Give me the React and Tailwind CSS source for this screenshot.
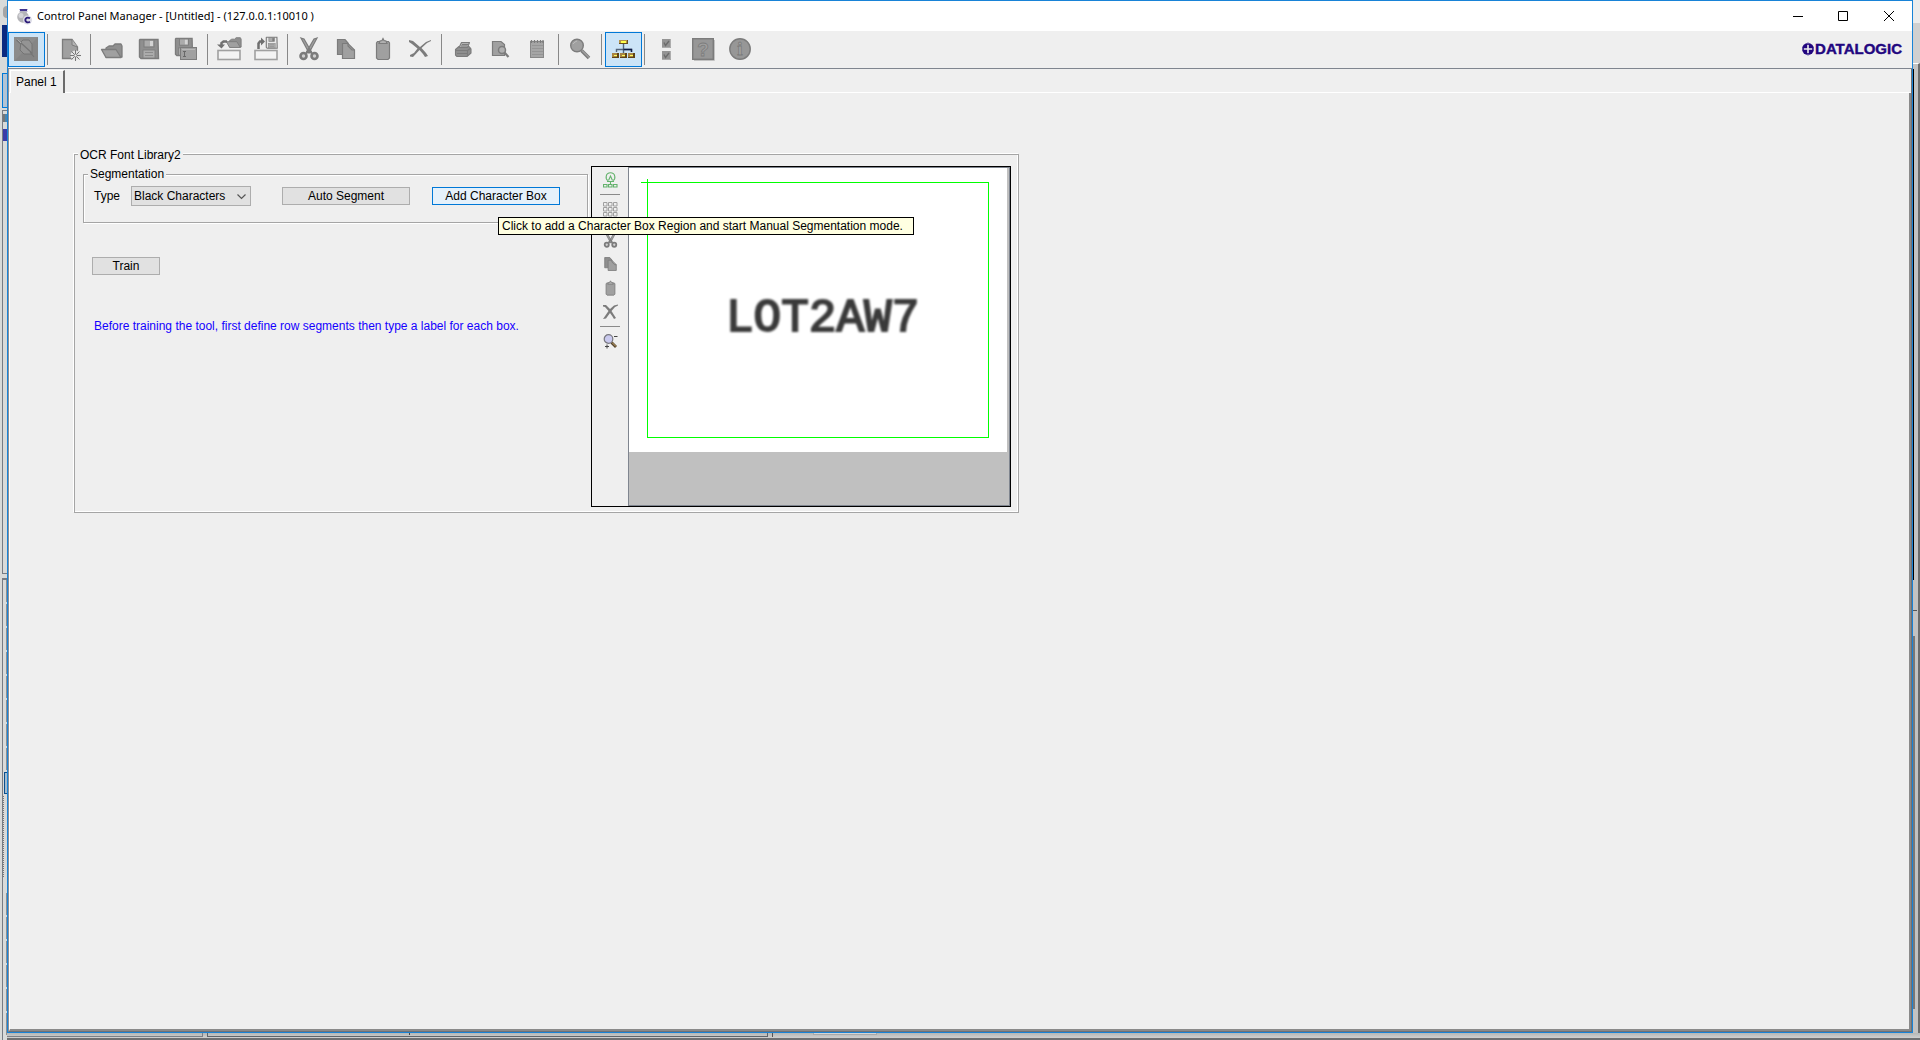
import React from "react";

const D = "#7c7c7c";
const F = "#a0a0a0";
const M = "#8f8f8f";

function Floppy({ x, y, s, light }) {
  const k = s / 20;
  return (
    <g transform={`translate(${x} ${y}) scale(${k})`}>
      <path d="M1 .5H19L19.5 19.5H2L.5 18V1Z" fill={light ? "#e8e8e8" : M} stroke={D} strokeWidth={light ? 2 : 1.4} />
      <rect x="5" y="1" width="10" height="7" fill="#ababab" stroke={D} />
      <rect x="11" y="2" width="3" height="5" fill={light ? D : "#d4d4d4"} />
      <rect x="4" y="11" width="12" height="8" fill="#acacac" stroke={D} strokeWidth=".8" />
      <path d="M6 13.500H14M6 16.500H14" stroke="#8b8b8b" />
    </g>
  );
}

function Folder({ x = 0, y = 0, k = 1 }) {
  return (
    <g transform={`translate(${x} ${y}) scale(${k})`} fill={F} stroke={D} strokeWidth="1.3" strokeLinejoin="round">
      <path d="M5 14V5L8 3H12L14 1H20L21 3V14Z" fill={M} />
      <path d="M.5 6.500H15L20 14.500H5Z" />
    </g>
  );
}

function Scissors() {
  return (
    <g stroke={D} fill="none">
      <path d="M10 6L13 7L20.500 20L18 21Z M26 6L23 7L15.500 20L18 21Z" fill={F} strokeWidth="1.2" />
      <circle cx="12.500" cy="24" r="3" strokeWidth="2.6" fill="#d0d0d0" />
      <circle cx="23.500" cy="24" r="3" strokeWidth="2.6" fill="#d0d0d0" />
      <path d="M15 22L18 17L21 22" strokeWidth="2" />
    </g>
  );
}

function Pages() {
  return (
    <g fill={F} stroke={D} strokeWidth="1.2">
      <path d="M9.500 7.500H17L20 11V22.500H9.500Z" fill={M} />
      <path d="M14.500 11.500H20L26.500 18V26.500H14.500Z" />
      <path d="M20 11.500V14L24 18H26.500" fill="none" />
    </g>
  );
}

function Clipboard() {
  return (
    <g stroke={D} strokeWidth="1.2">
      <path d="M12.500 9.500H23.500L24.500 11V26L23 27.500H13L11.500 26V11Z" fill={F} />
      <path d="M14 11.500L15 9L17 8.500L18 6.500L19 8.500L21 9L22 11.500Z" fill="#b0b0b0" />
    </g>
  );
}

function Cross() {
  return (
    <path
      d="M7 8L11 9L18 15L24 10L29 8V9L25 11L19.500 16L24 21L26 24L23 25L21 22L17.500 18L11 25L8 24.500V23L12 21L15.500 16.500L10 12L7 10Z"
      fill={D}
    />
  );
}

const icons = {
  connect: (
    <>
      <rect x="6" y="5" width="24" height="24" fill="#8c8c8c" />
      <path d="M6 29L30 5V29Z" fill="#858585" />
      <path d="M13 10L15 8H21L24 12V22H16L12 18Z" fill="#949494" stroke="#747474" />
      <path d="M8.500 8L13 12M22 20L26 25M13 11L24 21" stroke="#747474" strokeWidth="1.2" />
      <path d="M9.500 7.500L13 11" stroke="#a8a8a8" />
    </>
  ),
  create: (
    <>
      <path d="M11.500 7.500H21L26.500 15V26.500H11.500Z" fill={F} stroke={D} strokeWidth="1.3" />
      <path d="M21 7.500V13L26.500 15" fill="#b5b5b5" stroke={D} />
      <circle cx="24.500" cy="23.500" r="5" fill="#e4e4e4" />
      <path d="M24.500 18V29M19 23.500H30M20.500 19.500L28.500 27.500M28.500 19.500L20.500 27.500" stroke="#777" />
      <circle cx="24.500" cy="23.500" r="1.500" fill="#f2f2f2" stroke="#777" strokeWidth=".7" />
    </>
  ),
  open: <Folder x={7} y={11} />,
  save: <Floppy x={8} y={7} s={20} />,
  saveAs: (
    <>
      <Floppy x={7} y={6} s={18} />
      <rect x="12.500" y="15.500" width="16" height="12" fill={F} stroke={D} />
      <path d="M14 17.500H27" stroke="#b8b8b8" />
      <path d="M15 19.500H18M16.500 19.500V24.500M15 24.500H18" stroke="#686868" />
    </>
  ),
  importPanel: (
    <>
      <rect x="7" y="18.500" width="22" height="9" fill="#f3f3f3" stroke={F} strokeWidth="1.6" />
      <Folder x={15} y={5} k={0.72} />
      <path d="M16 9.500H12.500L10.500 11V13" fill="none" stroke="#707070" strokeWidth="2.500" />
      <path d="M6 12.500H14L10.500 16.500Z" fill="#707070" />
    </>
  ),
  exportPanel: (
    <>
      <rect x="7" y="18.500" width="22" height="9" fill="#f3f3f3" stroke={F} strokeWidth="1.6" />
      <Floppy x={18} y={5} s={11.500} light />
      <path d="M10.500 17V11.500L12 9.500H14" fill="none" stroke="#707070" strokeWidth="2.500" />
      <path d="M13 5.500L17 9.500L13 13.500Z" fill="#707070" />
    </>
  ),
  cut: <Scissors />,
  copy: <Pages />,
  paste: <Clipboard />,
  remove: <Cross />,
  print: (
    <g stroke={D} strokeWidth="1.1" fill={F} strokeLinejoin="round">
      <path d="M10.500 17.500L14 14.500H24L26 17V21L22 24.500H12L10.500 23Z" fill={M} />
      <path d="M14 15.500L16.500 10.500H24.500L22.500 15.500Z" fill="#b4b4b4" />
      <path d="M17 12.500H23M16 14H22M10.500 18.500H22.500L26 16M12 21.500H22M22.500 18.500V24" fill="none" />
    </g>
  ),
  preview: (
    <g stroke={D} strokeWidth="1.2">
      <path d="M10.500 9.500H19L22.500 12.500V23.500H10.500Z" fill={F} />
      <circle cx="20" cy="18" r="3.500" fill="#b0b0b0" strokeWidth="1.500" />
      <path d="M22.500 20.500L26.500 25" strokeWidth="2.200" />
    </g>
  ),
  notes: (
    <g stroke={D}>
      <rect x="11.500" y="9.500" width="13" height="16" fill="#a6a6a6" stroke="#888" />
      <path d="M12.500 8V11M15.500 8V11M18.500 8V11M21.500 8V11M24 8V11" strokeWidth="1.3" />
      <path d="M13 13.500H24M13 16.500H24M13 19.500H24M13 22.500H24" stroke="#959595" />
    </g>
  ),
  find: (
    <>
      <path d="M19.500 18.500L27 26" stroke={D} strokeWidth="3.600" />
      <path d="M20 18.500L27 25.500" stroke={F} strokeWidth="1.2" />
      <circle cx="15" cy="13.500" r="6.300" fill={F} stroke={D} strokeWidth="1.4" />
      <path d="M11 12L13 10L15 9" fill="none" stroke="#bbb" />
    </>
  ),
  tree: (
    <>
      <path d="M18.500 12V21M11.500 20V17.500H26.500V20" fill="none" stroke="#53657c" strokeWidth="1.4" />
      <path d="M18.500 17.500H26.500V20" fill="none" stroke="#101c46" strokeWidth="1.4" />
      <rect x="14" y="8" width="9" height="4" fill="#6b4f1e" />
      <rect x="14" y="8" width="8" height="3" fill="#b5934b" />
      <rect x="16" y="9" width="5" height="2" fill="#ffff4d" />
      {[7, 15, 23].map((x) => (
        <g key={x}>
          <rect x={x} y="21" width="7" height="5" fill="#5e4315" />
          <rect x={x} y="21" width="5" height="4" fill="#a98543" />
          <rect x={x + 2} y="23" width="3" height="1" fill="#ffff5a" />
        </g>
      ))}
    </>
  ),
  checks: (
    <>
      {[7, 19].map((y) => (
        <g key={y} transform={`translate(14 ${y})`}>
          <rect width="9" height="9" fill="#949494" />
          <path d="M8.500 0V8.500H0" fill="none" stroke="#adadad" />
          <path d="M2 3.500L3.500 6.500L7 2" fill="none" stroke="#6c6c6c" strokeWidth="1.400" />
        </g>
      ))}
    </>
  ),
  help: (
    <>
      <path d="M29.500 8V28.500H9" fill="none" stroke="#c2c2c2" />
      <rect x="7.700" y="6.700" width="20.600" height="20.600" fill="#979797" stroke={D} strokeWidth="1.4" />
      <text x="18" y="24" textAnchor="middle" fontFamily="Liberation Sans" fontWeight="700" fontSize="19" fill="#9f9f9f" stroke="#7c7c7c" strokeWidth=".8">?</text>
    </>
  ),
  info: (
    <>
      <circle cx="18.500" cy="17.500" r="10.500" fill="#c2c2c2" />
      <circle cx="18" cy="17" r="10.200" fill="#979797" stroke={D} strokeWidth="1.4" />
      <text x="18" y="23" textAnchor="middle" fontFamily="Liberation Serif" fontWeight="700" fontSize="19" fill="#a2a2a2" stroke="#7c7c7c" strokeWidth=".8">i</text>
    </>
  ),
};

const toolbar = [
  [["connect", "Connect", true]],
  [["create", "New"]],
  [["open", "Open"], ["save", "Save"], ["saveAs", "Save As"]],
  [["importPanel", "Import"], ["exportPanel", "Export"]],
  [["cut", "Cut"], ["copy", "Copy"], ["paste", "Paste"], ["remove", "Delete"]],
  [["print", "Print"], ["preview", "Preview"], ["notes", "Notes"]],
  [["find", "Find"]],
  [["tree", "Show tree", true]],
  [["checks", "Options"], ["help", "Help"], ["info", "About"]],
];

function ToolButton({ name, label, active }) {
  return (
    <button
      type="button"
      aria-label={label}
      className={active ? "h-[35px] w-[37px] bg-[#cce4f7] ring-1 ring-[#0078d7] ring-inset" : "h-[35px] w-[37px]"}
    >
      <svg width="37" height="35" viewBox="0 0 37 35">{icons[name]}</svg>
    </button>
  );
}

function TitleBar() {
  return (
    <header className="flex h-[30px] items-center bg-white pl-2">
      <svg width="16" height="18" viewBox="0 0 16 18" className="mr-[5px]">
        <path d="M3.500 2H11.500L10.500 5.500H4.500Z" fill="#43358f" />
        <path d="M3.500 4.500H11.500" stroke="#b9b6cc" />
        <circle cx="7" cy="10" r="5.800" fill="#b4b4b8" />
        <circle cx="5" cy="8.500" r="2.500" fill="#d4d4d8" />
        <circle cx="11.500" cy="13" r="4.500" fill="#dcdce6" />
        <path d="M14 11.300C11.500 9.800 9.300 11 9.300 13S11.500 16.200 14 14.700" fill="none" stroke="#2b1a78" strokeWidth="1.900" />
      </svg>
      <h1 className="flex-1 font-['Noto_Sans','Open_Sans',sans-serif] text-[11px] leading-4 whitespace-pre">
        Control Panel Manager - [Untitled] - (127.0.0.1:10010 )
      </h1>
      <div className="flex">
        <button type="button" aria-label="Minimize" className="grid h-[28px] w-[45px] place-items-center">
          <svg width="10" height="10" viewBox="0 0 10 10"><path d="M0 5.500H10" stroke="#000" /></svg>
        </button>
        <button type="button" aria-label="Maximize" className="grid h-[28px] w-[45px] place-items-center">
          <svg width="10" height="10" viewBox="0 0 10 10"><path d="M.5 .5H9.500V9.500H.5Z" fill="none" stroke="#000" /></svg>
        </button>
        <button type="button" aria-label="Close" className="grid h-[28px] w-[47px] place-items-center">
          <svg width="10" height="10" viewBox="0 0 10 10"><path d="M0 0L10 10M10 0L0 10" stroke="#000" /></svg>
        </button>
      </div>
    </header>
  );
}

function Logo() {
  return (
    <div className="flex items-center gap-px">
      <svg width="12" height="14" viewBox="0 0 12 14">
        <circle cx="6" cy="7" r="6" fill="#22067f" />
        <path d="M6 3V11M2 7H10" stroke="#efefef" strokeWidth="1.600" />
        <path d="M6 0V2.500M6 11.500V14M0 7H1.500M10.500 7H12" stroke="#8d80bd" strokeWidth="1" />
      </svg>
      <span className="text-[15px] leading-5 font-bold text-[#22067f] [-webkit-text-stroke:0.4px_#22067f]">DATALOGIC</span>
    </div>
  );
}

function Toolbar() {
  return (
    <div role="toolbar" className="flex h-[38px] items-start border-b border-[#7f858f] pt-px">
      {toolbar.map((group, i) => (
        <React.Fragment key={i}>
          {i > 0 && <span className="mt-0.5 mr-[3px] ml-0.5 h-[31px] w-px bg-[#888]" />}
          {group.map(([name, label, active]) => (
            <ToolButton key={name} name={name} label={label} active={active} />
          ))}
        </React.Fragment>
      ))}
      <div className="mt-[7px] mr-2.5 ml-auto">
        <Logo />
      </div>
    </div>
  );
}

const sideIcons = {
  tree: (
    <g fill="none" stroke="#63b26c" strokeWidth="1.1">
      <path d="M5 8.500C2 7 2.500 .800 7.500 .800S13 7 10 8.500" />
      <path d="M5.500 8.500L7.500 4L9.500 8.500M4 9.500H11M7.500 9V12" />
      <path d="M.5 12.500H4V15H.5ZM5.500 12.500H9V15H5.500ZM10.500 12.500H14V15H10.500Z" />
    </g>
  ),
  grid: (
    <g fill="none" stroke="#a0a0a0">
      {[0.5, 5.5, 10.5].map((y) => (
        <path key={y} d={`M.5 ${y}h3.500v3.500h-3.500zM5.500 ${y}h3.500v3.500h-3.500zM10.500 ${y}h3.500v3.500h-3.500z`} />
      ))}
    </g>
  ),
  cross: (
    <path d="M0 1H3L7 5L11 1.500L15 .5V1.500L12 3L8.500 7L11 11L13 14L11 15L9.500 12.500L7 9L3 14.500L0 15L5.500 7L2 3L0 2.500Z" fill={D} />
  ),
  zoom: (
    <>
      <path d="M8.500 8.500L13 13" stroke="#54442e" strokeWidth="2.800" />
      <path d="M9 8.500L13 12.500" stroke="#c9a86b" />
      <circle cx="5.500" cy="5" r="4.300" fill="#c9c9ee" stroke="#77777f" strokeWidth="1.2" />
      <path d="M11 2.500H14.500M2 12.500H6M4 10.500V14.500" stroke="#444" />
    </>
  ),
};

function SideButton({ label, children, big }) {
  return (
    <button type="button" aria-label={label} className="grid h-6 w-6 place-items-center">
      <svg width="15" height="16" viewBox={big ? "7 6 22 22" : "0 0 15 16"}>{children}</svg>
    </button>
  );
}

function ImageViewer() {
  return (
    <div className="flex h-[341px] w-[420px] border border-black">
      <div className="flex w-9 flex-col items-center pt-px">
        <SideButton label="Segment tree">{sideIcons.tree}</SideButton>
        <span className="mt-0.5 mb-[3px] h-px w-5 bg-[#8a8a8a]" />
        <SideButton label="Grid">{sideIcons.grid}</SideButton>
        <span className="h-1.5" />
        <SideButton label="Cut region" big><Scissors /></SideButton>
        <SideButton label="Copy region" big><Pages /></SideButton>
        <SideButton label="Paste region" big><Clipboard /></SideButton>
        <SideButton label="Delete region">{sideIcons.cross}</SideButton>
        <span className="mt-0.5 mb-[3px] h-px w-5 bg-[#8a8a8a]" />
        <SideButton label="Zoom">{sideIcons.zoom}</SideButton>
      </div>
      <div className="flex-1 border border-[#7f858f] bg-[#c0c0c0] pr-0.5">
        <div className="relative h-[284px] bg-white">
          <span className="absolute top-[14px] left-3 h-px w-1.5 bg-[#00ff00]" />
          <span className="absolute top-[11px] left-[18px] h-[3px] w-px bg-[#00ff00]" />
          <div className="absolute top-[14px] right-[18px] bottom-[14px] left-[18px] border border-[#00ff00]" />
          <p className="absolute top-[127px] left-[97px] font-['Liberation_Mono',monospace] text-[46px] leading-[48px] text-[#3a3a3a] blur-[1px] [-webkit-text-stroke:2px_#3a3a3a]">
            LOT2AW7
          </p>
        </div>
      </div>
    </div>
  );
}

function Segmentation() {
  return (
    <fieldset className="h-[56px] min-w-0 border border-[#a5a5a5] pl-2.5 shadow-[inset_1px_1px_0_#fff,1px_1px_0_#fff]">
      <legend className="-ml-1.5 h-[14px] bg-[#efefef] px-0.5 leading-[15px]">Segmentation</legend>
      <div className="flex items-center pt-[5px]">
        <label htmlFor="type" className="w-[37px]">Type</label>
        <div className="relative">
          <select
            id="type"
            className="block h-5 w-[120px] appearance-none rounded-none border border-[#adadad] bg-[#e1e1e1] pl-0.5 leading-[18px]"
          >
            <option>Black Characters</option>
          </select>
          <svg width="9" height="6" viewBox="0 0 9 6" className="pointer-events-none absolute top-[8px] right-[5px]">
            <path d="M.5 .5L4.500 4.500L8.500 .5" fill="none" stroke="#555" strokeWidth="1.2" />
          </svg>
        </div>
        <button type="button" className="ml-[31px] h-[18px] w-32 border border-[#adadad] bg-[#e1e1e1] leading-4">
          Auto Segment
        </button>
        <div className="relative ml-[22px]">
          <button
            type="button"
            aria-describedby="tip"
            className="block h-[18px] w-32 border border-[#0078d7] bg-[#e5f1fb] leading-4"
          >
            Add Character Box
          </button>
          <div
            id="tip"
            role="tooltip"
            className="absolute top-[30px] left-[66px] z-10 h-[18px] w-[416px] border border-black bg-[#ffffe1] px-[3px] leading-4 whitespace-nowrap"
          >
            Click to add a Character Box Region and start Manual Segmentation mode.
          </div>
        </div>
      </div>
    </fieldset>
  );
}

function OcrPanel() {
  return (
    <fieldset className="w-[945px] border border-[#a5a5a5] pr-[7px] pb-[5px] pl-2 shadow-[-1px_-1px_0_#fff,inset_-1px_-1px_0_#fff]">
      <legend className="-ml-[5px] h-[15px] bg-[#efefef] px-0.5 leading-4">OCR Font Library2</legend>
      <div className="flex gap-[3px] pt-1">
        <div className="min-w-0 flex-1 pt-px">
          <Segmentation />
          <button type="button" className="mt-[34px] ml-[9px] block h-[18px] w-[68px] border border-[#adadad] bg-[#e1e1e1] leading-4">
            Train
          </button>
          <p className="mt-[43px] ml-[11px] leading-4 text-[#1400ff]">
            Before training the tool, first define row segments then type a label for each box.
          </p>
        </div>
        <ImageViewer />
      </div>
    </fieldset>
  );
}

function StripButtons({ count }) {
  return Array.from({ length: count }, (_, i) => (
    <div key={i} className="mb-0.5 ml-1 h-[22px] shrink-0 border-y border-l border-[#8f8f8f] bg-[#bcbcbc]" />
  ));
}

function LeftStrip() {
  return (
    <div className="row-span-2 flex flex-col overflow-hidden bg-[#d9dbda]">
      <div className="mt-1.5 ml-[3px] h-3 rounded-l-full bg-[#a5a5a5]" />
      <div className="mt-[7px] ml-0.5 h-8 bg-[#0b2a80]" />
      <div className="mt-4 ml-0.5 h-[35px] border-y border-l border-[#0078d7] bg-[#b3c4d4]" />
      <div className="mt-0.5 ml-0.5 h-[464px] border-y border-l border-[#777c84] pt-[3px]">
        <div className="h-2 border-l-2 border-[#777] bg-[#4e86ad]" />
        <div className="mt-[7px] h-3 bg-[#3b3ba8]" />
      </div>
      <div className="mt-1 ml-0.5 flex min-h-0 flex-1 flex-col border-t-2 border-l border-[#777c84]">
        <div className="-ml-px flex flex-col">
          <StripButtons count={8} />
        </div>
        <div className="ml-px h-[22px] shrink-0 border-y border-l border-[#0c4f8c] bg-[#a6bccd]" />
        <div className="mt-0.5 mb-4 h-[81px] shrink-0 border-l border-dotted border-[#777]" />
        <div className="-ml-px flex flex-col">
          <StripButtons count={6} />
        </div>
      </div>
    </div>
  );
}

function RightStrip() {
  return (
    <div className="flex flex-col">
      <div className="h-[23px] bg-[#ececec]" />
      <div className="h-10 bg-[#d0d0d0]" />
      <div className="flex flex-1 flex-col border-t border-r-2 border-t-white border-r-[#6b6b6b] bg-[#c2c2c2]">
        <div className="mt-[5px] h-[511px] w-px bg-black" />
        <div className="mt-[30px] h-px w-1 bg-[#555]" />
        <div className="mt-[25px] h-[373px] w-0.5 bg-[#777]" />
      </div>
    </div>
  );
}

function BottomStrip() {
  return (
    <div className="col-span-2 flex border-b-2 border-[#6f7072] bg-gradient-to-b from-[#b5b7b6] to-[#cfcfcf]">
      <div className="h-1 w-[196px] border-r border-b border-[#7b8087]" />
      <div className="ml-1 h-1 w-[561px] border-x border-b border-[#60656b]">
        <div className="ml-[201px] h-0.5 w-px bg-[#444]" />
      </div>
      <div className="ml-1 h-1 w-px bg-[#555]" />
      <div className="ml-10 h-0.5 w-16 border-x border-b border-[#aaa] bg-[#d5d5d5]" />
    </div>
  );
}

export default function App() {
  return (
    <div className="grid h-screen grid-cols-[7px_1fr_7px] grid-rows-[1fr_7px] overflow-hidden bg-[#c8c8c8] font-['Liberation_Sans',Arial,sans-serif] text-[12px] text-black">
      <LeftStrip />
      <main className="flex min-w-0 flex-col border border-[#1883d7] bg-[#efefef]">
        <TitleBar />
        <Toolbar />
        <div className="flex flex-1 flex-col border-r border-b border-l border-r-[#6e7076] border-b-[#6e7076] border-l-[#8a9099]">
          <div role="tablist" className="flex h-6 items-end border-b border-white pl-px">
            <button
              type="button"
              role="tab"
              aria-selected="true"
              className="-mb-px h-[23px] border-t border-r-2 border-l border-t-white border-r-[#6b6b6b] border-l-white bg-[#efefef] pr-1.5 pl-[5px] leading-5"
            >
              Panel 1
            </button>
          </div>
          <section className="flex-1 border-r-2 border-b-2 border-l border-r-[#8a8a8a] border-b-[#8a8a8a] border-l-white pt-[54px] pl-16">
            <OcrPanel />
          </section>
        </div>
      </main>
      <RightStrip />
      <BottomStrip />
    </div>
  );
}
